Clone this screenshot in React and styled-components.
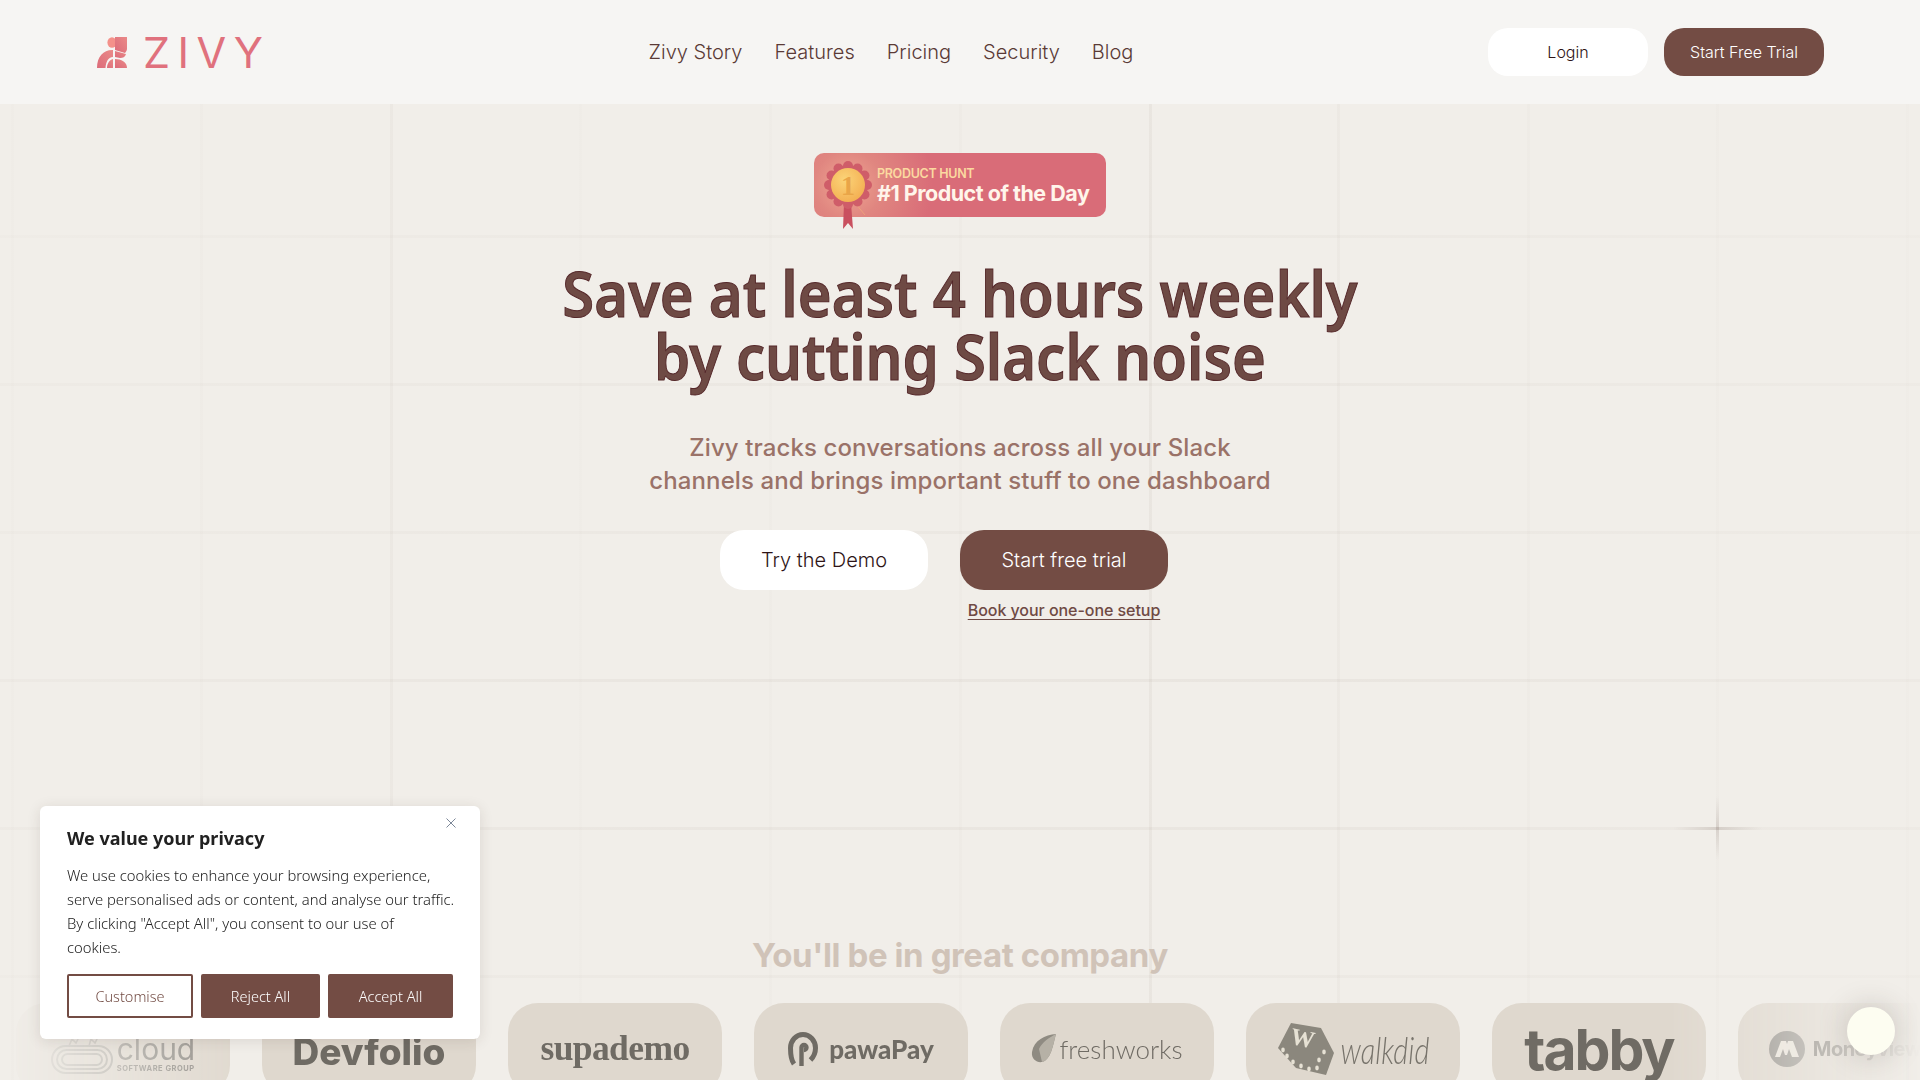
import styled, { createGlobalStyle } from 'styled-components';

const verticalLines = [
  [12, 0.012], [201, 0.014], [391, 0.04], [580, 0.012], [770, 0.016], [960, 0.018],
  [1150, 0.06], [1338, 0.035], [1528, 0.02], [1717, 0.016], [1907, 0.012],
];
const horizontalLines = [
  [236, 0.035], [384, 0.045], [532, 0.045], [680, 0.06], [828, 0.055], [976, 0.035],
];

const lineColor = (a) => `rgba(110,90,75,${a})`;

const gridBackground = [
  ...verticalLines.map(
    ([x, a]) => `linear-gradient(${lineColor(a)}, ${lineColor(a)}) ${x - 1}px 0 / 3px 100% no-repeat`
  ),
  ...horizontalLines.map(
    ([y, a]) =>
      `linear-gradient(90deg, ${lineColor(a * 0.5)}, ${lineColor(a)} 40%, ${lineColor(a)} 70%, ${lineColor(a * 0.5)}) 0 ${y - 1}px / 100% 3px no-repeat`
  ),
].join(', ');

const GlobalStyle = createGlobalStyle`
  html, body {
    margin: 0;
    padding: 0;
    background: #f1eee9;
  }
  * {
    box-sizing: border-box;
  }
`;

const Page = styled.div`
  position: relative;
  height: 1080px;
  overflow: hidden;
  background: ${gridBackground}, #f1eee9;
  font-family: Inter, 'Liberation Sans', sans-serif;
`;

const Header = styled.header`
  height: 104px;
  padding: 0 96px 0 97px;
  display: flex;
  align-items: center;
  justify-content: space-between;
  background: #f6f5f3;
`;

const Brand = styled.div`
  width: 197px;
  display: flex;
  align-items: center;
  gap: 15px;
`;

const BrandName = styled.span`
  font-size: 43px;
  line-height: 1;
  font-weight: 400;
  letter-spacing: 7.5px;
  color: #e0717d;
`;

const Nav = styled.nav`
  display: flex;
  gap: 32px;
`;

const NavLink = styled.a`
  font-size: 20px;
  font-weight: 300;
  color: #5a3a36;
`;

const HeaderActions = styled.div`
  display: flex;
  gap: 16px;
`;

const HeaderButton = styled.button`
  width: 160px;
  height: 48px;
  border: 0;
  border-radius: 20px;
  font-family: inherit;
  font-size: 16px;
  font-weight: 300;
  background: ${(p) => (p.$primary ? '#734c44' : '#fff')};
  color: ${(p) => (p.$primary ? '#fff' : '#2e1416')};
`;

const Hero = styled.main`
  padding-top: 49px;
  display: flex;
  flex-direction: column;
  align-items: center;
`;

const Badge = styled.div`
  position: relative;
  width: 292px;
  height: 64px;
  padding: 14px 0 0 63px;
  border-radius: 10px;
  background: radial-gradient(circle at 34px 32px, #f0a793 0, #e08680 34px, transparent 85px), #d96c78;
`;

const Medal = styled.svg`
  position: absolute;
  left: 9px;
  top: 6px;
`;

const BadgeOver = styled.div`
  font-size: 12.5px;
  line-height: 14px;
  font-weight: 600;
  letter-spacing: -0.3px;
  color: #fbd9a0;
`;

const BadgeTitle = styled.div`
  font-size: 21.5px;
  line-height: 24px;
  font-weight: 700;
  letter-spacing: -0.5px;
  white-space: nowrap;
  color: #fff5ea;
`;

const Title = styled.h1`
  margin: 44px 0 0;
  width: 1000px;
  text-align: center;
  font-family: 'Noto Sans', sans-serif;
  font-size: 63px;
  line-height: 63px;
  font-weight: 600;
  color: #6e4a44;
  -webkit-text-stroke: 1px #55282a;
  transform: scaleX(0.92);
`;

const Subtitle = styled.p`
  margin: 44px 0 0;
  text-align: center;
  font-size: 24px;
  line-height: 33px;
  font-weight: 550;
  letter-spacing: 0.1px;
  color: #9a7268;
`;

const Actions = styled.div`
  margin: 33px 32px 0 0;
  display: grid;
  grid-template-columns: 208px 208px;
  column-gap: 32px;
  row-gap: 10px;
`;

const CtaButton = styled.button`
  height: 60px;
  border: 0;
  border-radius: 24px;
  font-family: inherit;
  font-size: 20px;
  font-weight: 300;
  background: ${(p) => (p.$primary ? '#734c44' : '#fff')};
  color: ${(p) => (p.$primary ? '#fff' : '#2e1416')};
`;

const SetupLink = styled.a`
  grid-column: 2;
  justify-self: center;
  font-size: 16px;
  line-height: 20px;
  font-weight: 500;
  letter-spacing: -0.05px;
  color: #6f4a44;
  text-decoration: underline;
  text-underline-offset: 3px;
`;

const CompanyTitle = styled.h2`
  margin: 315px 0 0;
  text-align: center;
  font-size: 33px;
  line-height: 40px;
  font-weight: 700;
  letter-spacing: -0.4px;
  color: #d0c3b8;
`;

const LogoRow = styled.div`
  margin-top: 28px;
  padding-left: 16px;
  display: flex;
  gap: 32px;
  mask-image: linear-gradient(90deg, transparent 0, #000 13%, #000 87%, transparent 100%);
`;

const LogoCard = styled.div`
  flex: 0 0 214px;
  height: 92px;
  border-radius: 30px;
  background: #dfd8ce;
  display: flex;
  align-items: center;
  justify-content: center;
  gap: ${(p) => p.$gap || 0}px;
  color: #6f6b64;
`;

const LogoWord = styled.span`
  padding-top: ${(p) => p.$drop || 0}px;
  font-family: ${(p) => p.$font || 'Inter'}, sans-serif;
  font-size: ${(p) => p.$size}px;
  font-weight: ${(p) => p.$weight || 400};
  letter-spacing: ${(p) => p.$spacing || 0}px;
  line-height: 1;
`;

const SignatureWord = styled.span`
  font-family: Lato, sans-serif;
  font-size: 29px;
  font-style: italic;
  font-weight: 300;
  line-height: 1;
  color: #77736b;
  transform: scaleY(1.3);
`;

const CloudLockup = styled.div`
  padding-top: 10px;
`;

const CloudWord = styled.div`
  font-size: 30px;
  line-height: 30px;
  font-weight: 400;
  color: #8d8a84;
`;

const CloudSub = styled.div`
  font-size: 7.5px;
  line-height: 10px;
  font-weight: 700;
  letter-spacing: 0.5px;
  color: #8d8a84;
`;

const CloudShape = styled.svg`
  margin-top: 10px;
`;

const CookieCard = styled.aside`
  position: absolute;
  left: 40px;
  top: 806px;
  width: 440px;
  height: 233px;
  padding: 19px 20px 0 27px;
  background: #fff;
  border-radius: 6px;
  box-shadow: 0 2px 14px rgba(60, 40, 30, 0.12);
  font-family: 'Noto Sans', sans-serif;
`;

const CookieClose = styled.svg`
  position: absolute;
  top: 12px;
  right: 24px;
`;

const CookieTitle = styled.h3`
  margin: 0;
  font-size: 18px;
  line-height: 26px;
  font-weight: 700;
  color: #212121;
`;

const CookieText = styled.p`
  margin: 12px 0 0;
  font-size: 14.8px;
  line-height: 24px;
  font-weight: 300;
  color: #212121;
`;

const CookieActions = styled.div`
  margin-top: 15px;
  display: flex;
  gap: 8px;
`;

const CookieButton = styled.button`
  width: ${(p) => p.$width}px;
  height: 44px;
  border: 2px solid #734c44;
  border-radius: 2px;
  font-family: inherit;
  font-size: 14.5px;
  font-weight: 300;
  background: ${(p) => (p.$outline ? '#fff' : '#734c44')};
  color: ${(p) => (p.$outline ? '#734c44' : '#fff')};
`;

const ChatBubble = styled.div`
  position: absolute;
  left: 1847px;
  top: 1007px;
  width: 48px;
  height: 48px;
  border-radius: 50%;
  background: #fdfdf1;
  box-shadow: 0 0 30px rgba(60, 50, 40, 0.22);
`;

const SparkleH = styled.div`
  position: absolute;
  left: 1673px;
  top: 827px;
  width: 90px;
  height: 3px;
  background: linear-gradient(90deg, transparent, rgba(110, 90, 80, 0.18) 50%, transparent);
`;

const SparkleV = styled.div`
  position: absolute;
  left: 1716px;
  top: 796px;
  width: 3px;
  height: 64px;
  background: linear-gradient(180deg, transparent, rgba(110, 90, 80, 0.18) 50%, transparent);
`;

const ZivyMark = () => (
  <svg width="31" height="31" viewBox="0 0 31 31">
    <defs>
      <linearGradient id="zivyFill" x1="0" y1="1" x2="1" y2="0">
        <stop offset="0" stopColor="#dc6b79" />
        <stop offset="1" stopColor="#ea8a88" />
      </linearGradient>
    </defs>
    <ellipse cx="15" cy="5.5" rx="4.6" ry="5.2" fill="#f4918a" />
    <path d="M18 0h12v12c0 1-1 3-2 4l-10-3z" fill="url(#zivyFill)" />
    <path d="M0 31C0 19 7 12.5 16 13v7c-5 0-7 5-7.5 11z" fill="url(#zivyFill)" />
    <path d="M18 14l11 3c-1 3-3 4-6 4l-5-1z" fill="url(#zivyFill)" />
    <path d="M10 31c0-4 2-8 6-9v9z" fill="url(#zivyFill)" />
    <path d="M18 22c6 0 12 3 12 9H18z" fill="url(#zivyFill)" />
  </svg>
);

const RosetteMedal = () => (
  <Medal width="52" height="72" viewBox="0 0 52 72">
    <defs>
      <radialGradient id="coinFill" cx="0.4" cy="0.35" r="0.8">
        <stop offset="0" stopColor="#fbd478" />
        <stop offset="1" stopColor="#f2a94c" />
      </radialGradient>
    </defs>
    <path d="M21 44l-1 26 5-6 5 6-2-26z" fill="#c9505f" />
    <path d="M32 44l10 12" stroke="#eda07c" strokeWidth="1" />
    {Array.from({ length: 12 }).map((_, i) => (
      <circle
        key={i}
        cx={25 + 19 * Math.cos((i * Math.PI) / 6)}
        cy={26 + 19 * Math.sin((i * Math.PI) / 6)}
        r="5"
        fill="#cf5d69"
      />
    ))}
    <circle cx="25" cy="26" r="19.5" fill="#cf5d69" />
    <circle cx="25" cy="26" r="17" fill="url(#coinFill)" />
    <text x="25" y="36" textAnchor="middle" fontFamily="Liberation Serif" fontWeight="700" fontSize="28" fill="#e9a548">
      1
    </text>
  </Medal>
);

const CloudIcon = () => (
  <CloudShape width="62" height="40" viewBox="0 0 62 40" fill="none" stroke="#a9a69f" strokeWidth="2">
    <rect x="1" y="12" width="60" height="27" rx="13.5" />
    <rect x="6" y="16" width="50" height="19" rx="9.5" />
    <rect x="11" y="20" width="40" height="11" rx="5.5" />
    <path d="M18 12l3-7 4 4 3-6M38 12l2-7 4 4 3-6" strokeWidth="1.6" />
  </CloudShape>
);

const PawaIcon = () => (
  <svg width="30" height="34" viewBox="0 0 30 34" fill="none" stroke="#6f6b64" strokeWidth="5">
    <path d="M6 32C3 28 2.500 23 2.500 16a12.500 13.500 0 0 1 25 0c0 5-2 9-5 12" />
    <path d="M13.500 34V15.500a2.500 2.500 0 1 1 2.500 2.500" strokeWidth="4.400" />
  </svg>
);

const FreshIcon = () => (
  <svg width="26" height="30" viewBox="0 0 26 30">
    <path d="M25 0C14 1 3 6 1 18c-1 7 5 11 10 10 9-2 11-17 14-28z" fill="#8f8b82" />
    <path d="M25 0C19 3 11 8 8 15l3 13c9-2 11-17 14-28z" fill="#b6b1a6" />
  </svg>
);

const DiceIcon = () => (
  <svg width="58" height="58" viewBox="0 0 58 58">
    <path d="M14 3l30 5 13 25-8 22-30-7L1 28z" fill="#8b877d" />
    <text x="24" y="26" textAnchor="middle" fontFamily="Liberation Serif" fontWeight="700" fontSize="24" fill="#e6e1d4" transform="rotate(12 24 26)">
      W
    </text>
    {[[10, 36], [16, 42], [24, 46], [32, 49], [42, 40], [47, 32], [40, 48], [6, 30]].map(([x, y]) => (
      <ellipse key={`${x}-${y}`} cx={x} cy={y} rx="1.8" ry="2.4" fill="#e6e1d4" />
    ))}
  </svg>
);

const MoneyIcon = () => (
  <svg width="36" height="36" viewBox="0 0 36 36">
    <circle cx="18" cy="18" r="18" fill="#8f8c86" />
    <path d="M6 26l6-16h5l1 3 1-3h5l6 16h-7l-3-8-2 6h-2l-2-6-3 8z" fill="#ece7dd" />
  </svg>
);

export default function App() {
  return (
    <Page>
      <GlobalStyle />
      <Header>
        <Brand>
          <ZivyMark />
          <BrandName>ZIVY</BrandName>
        </Brand>
        <Nav>
          <NavLink>Zivy Story</NavLink>
          <NavLink>Features</NavLink>
          <NavLink>Pricing</NavLink>
          <NavLink>Security</NavLink>
          <NavLink>Blog</NavLink>
        </Nav>
        <HeaderActions>
          <HeaderButton>Login</HeaderButton>
          <HeaderButton $primary>Start Free Trial</HeaderButton>
        </HeaderActions>
      </Header>

      <Hero>
        <Badge>
          <RosetteMedal />
          <BadgeOver>PRODUCT HUNT</BadgeOver>
          <BadgeTitle>#1 Product of the Day</BadgeTitle>
        </Badge>
        <Title>
          Save at least 4 hours weekly
          <br />
          by cutting Slack noise
        </Title>
        <Subtitle>
          Zivy tracks conversations across all your Slack
          <br />
          channels and brings important stuff to one dashboard
        </Subtitle>
        <Actions>
          <CtaButton>Try the Demo</CtaButton>
          <CtaButton $primary>Start free trial</CtaButton>
          <SetupLink>Book your one-one setup</SetupLink>
        </Actions>
        <CompanyTitle>You'll be in great company</CompanyTitle>
      </Hero>

      <LogoRow>
        <LogoCard $gap={4}>
          <CloudIcon />
          <CloudLockup>
            <CloudWord>cloud</CloudWord>
            <CloudSub>SOFTWARE GROUP</CloudSub>
          </CloudLockup>
        </LogoCard>
        <LogoCard>
          <LogoWord $size={37} $weight={800} $drop={4}>Devfolio</LogoWord>
        </LogoCard>
        <LogoCard>
          <LogoWord $font="'Liberation Serif'" $size={35.5} $weight={700} $spacing={-0.6}>supademo</LogoWord>
        </LogoCard>
        <LogoCard $gap={11}>
          <PawaIcon />
          <LogoWord $font="Lato" $size={26} $weight={900}>pawaPay</LogoWord>
        </LogoCard>
        <LogoCard $gap={2}>
          <FreshIcon />
          <LogoWord $font="Lato" $size={26} $weight={300}>freshworks</LogoWord>
        </LogoCard>
        <LogoCard $gap={6}>
          <DiceIcon />
          <SignatureWord>walkdid</SignatureWord>
        </LogoCard>
        <LogoCard>
          <LogoWord $size={57} $weight={700} $spacing={-2}>tabby</LogoWord>
        </LogoCard>
        <LogoCard $gap={8}>
          <MoneyIcon />
          <LogoWord $size={20} $weight={700} $spacing={-0.5}>Moneyview</LogoWord>
        </LogoCard>
      </LogoRow>

      <SparkleH />
      <SparkleV />

      <CookieCard>
        <CookieClose width="10" height="10" viewBox="0 0 10 10" stroke="#7c8798" strokeWidth="1">
          <path d="M0.5 0.5l9 9M9.5 0.5l-9 9" />
        </CookieClose>
        <CookieTitle>We value your privacy</CookieTitle>
        <CookieText>
          We use cookies to enhance your browsing experience,
          <br />
          serve personalised ads or content, and analyse our traffic.
          <br />
          By clicking "Accept All", you consent to our use of
          <br />
          cookies.
        </CookieText>
        <CookieActions>
          <CookieButton $outline $width={126}>Customise</CookieButton>
          <CookieButton $width={119}>Reject All</CookieButton>
          <CookieButton $width={125}>Accept All</CookieButton>
        </CookieActions>
      </CookieCard>

      <ChatBubble />
    </Page>
  );
}
